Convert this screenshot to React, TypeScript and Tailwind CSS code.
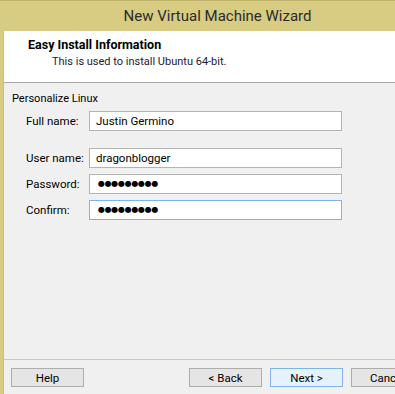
const font = { fontFamily: 'Roboto, "Noto Sans", sans-serif' };

type FieldProps = {
	label: string;
	value: string;
	secret?: boolean;
	focused?: boolean;
};

function Field({ label, value, secret, focused }: FieldProps) {
	return (
		<div className="flex items-center">
			<div className="w-[64px] shrink-0 whitespace-nowrap pl-[1px] text-[11.5px] leading-[16px] text-black">{label}</div>
			<div
				className={`h-[20px] w-[253px] shrink-0 flex items-center bg-white border ${
					focused ? "border-[#7eb4ea]" : "border-[#b4b4b4]"
				} ${secret ? "pl-[8px]" : "pl-[6px]"}`}
			>
				{secret ? (
					<span className="text-[8px] leading-[10px] tracking-[-0.3px] text-black" style={{ fontFamily: '"DejaVu Sans", sans-serif' }}>
						{"●".repeat(value.length)}
					</span>
				) : (
					<span className="text-[11.5px] leading-[16px] text-black">{value}</span>
				)}
			</div>
		</div>
	);
}

function WizardButton({ label, primary }: { label: string; primary?: boolean }) {
	return (
		<button
			className={`h-[19px] w-[73px] shrink-0 whitespace-nowrap text-[11.5px] leading-[16px] text-black border ${
				primary ? "bg-[#e5f1fb] border-[#7eb4ea]" : "bg-[#e5e5e5] border-[#adadad]"
			}`}
		>
			{label}
		</button>
	);
}

export default function App() {
	return (
		<div className="w-[395px] h-[394px] overflow-hidden flex flex-col bg-[#d8cc82]" style={font}>
			{/* title bar */}
			<div className="h-[31px] shrink-0 border-t border-[#bfb46c] flex items-center justify-center pl-[40px]">
				<span className="text-[15px] leading-[20px] text-[#2b2b2b]">New Virtual Machine Wizard</span>
			</div>

			<div className="flex-1 ml-[3px] border-l border-[#bdbdbd] flex flex-col min-h-0">
				{/* header */}
				<div className="h-[52px] shrink-0 bg-white border-b border-[#a9a9a9] pl-[24px] pt-[6px]">
					<div className="text-[12.5px] leading-[16px] font-bold text-black">Easy Install Information</div>
					<div className="pl-[24px] text-[11px] leading-[17px] text-[#1a1a3a]">This is used to install Ubuntu 64-bit.</div>
				</div>

				{/* content */}
				<div className="flex-1 bg-[#f0f0f0] pl-[8px] pt-[8px]">
					<div className="text-[11px] leading-[16px] text-black">Personalize Linux</div>
					<div className="pl-[13px] mt-[4px] flex flex-col">
						<Field label="Full name:" value="Justin Germino" />
						<div className="mt-[17px] flex flex-col gap-[6px]">
							<Field label="User name:" value="dragonblogger" />
							<Field label="Password:" value="123456789" secret />
							<Field label="Confirm:" value="123456789" secret focused />
						</div>
					</div>
				</div>

				{/* footer */}
				<div className="h-[35px] shrink-0 bg-[#f0f0f0] border-t border-[#c8c8c8] pt-[8px] pl-[7px] flex">
					<WizardButton label="Help" />
					<div className="ml-[105px] flex gap-[8px]">
						<WizardButton label="< Back" />
						<WizardButton label="Next >" primary />
						<WizardButton label="Cancel" />
					</div>
				</div>
			</div>
		</div>
	);
}
